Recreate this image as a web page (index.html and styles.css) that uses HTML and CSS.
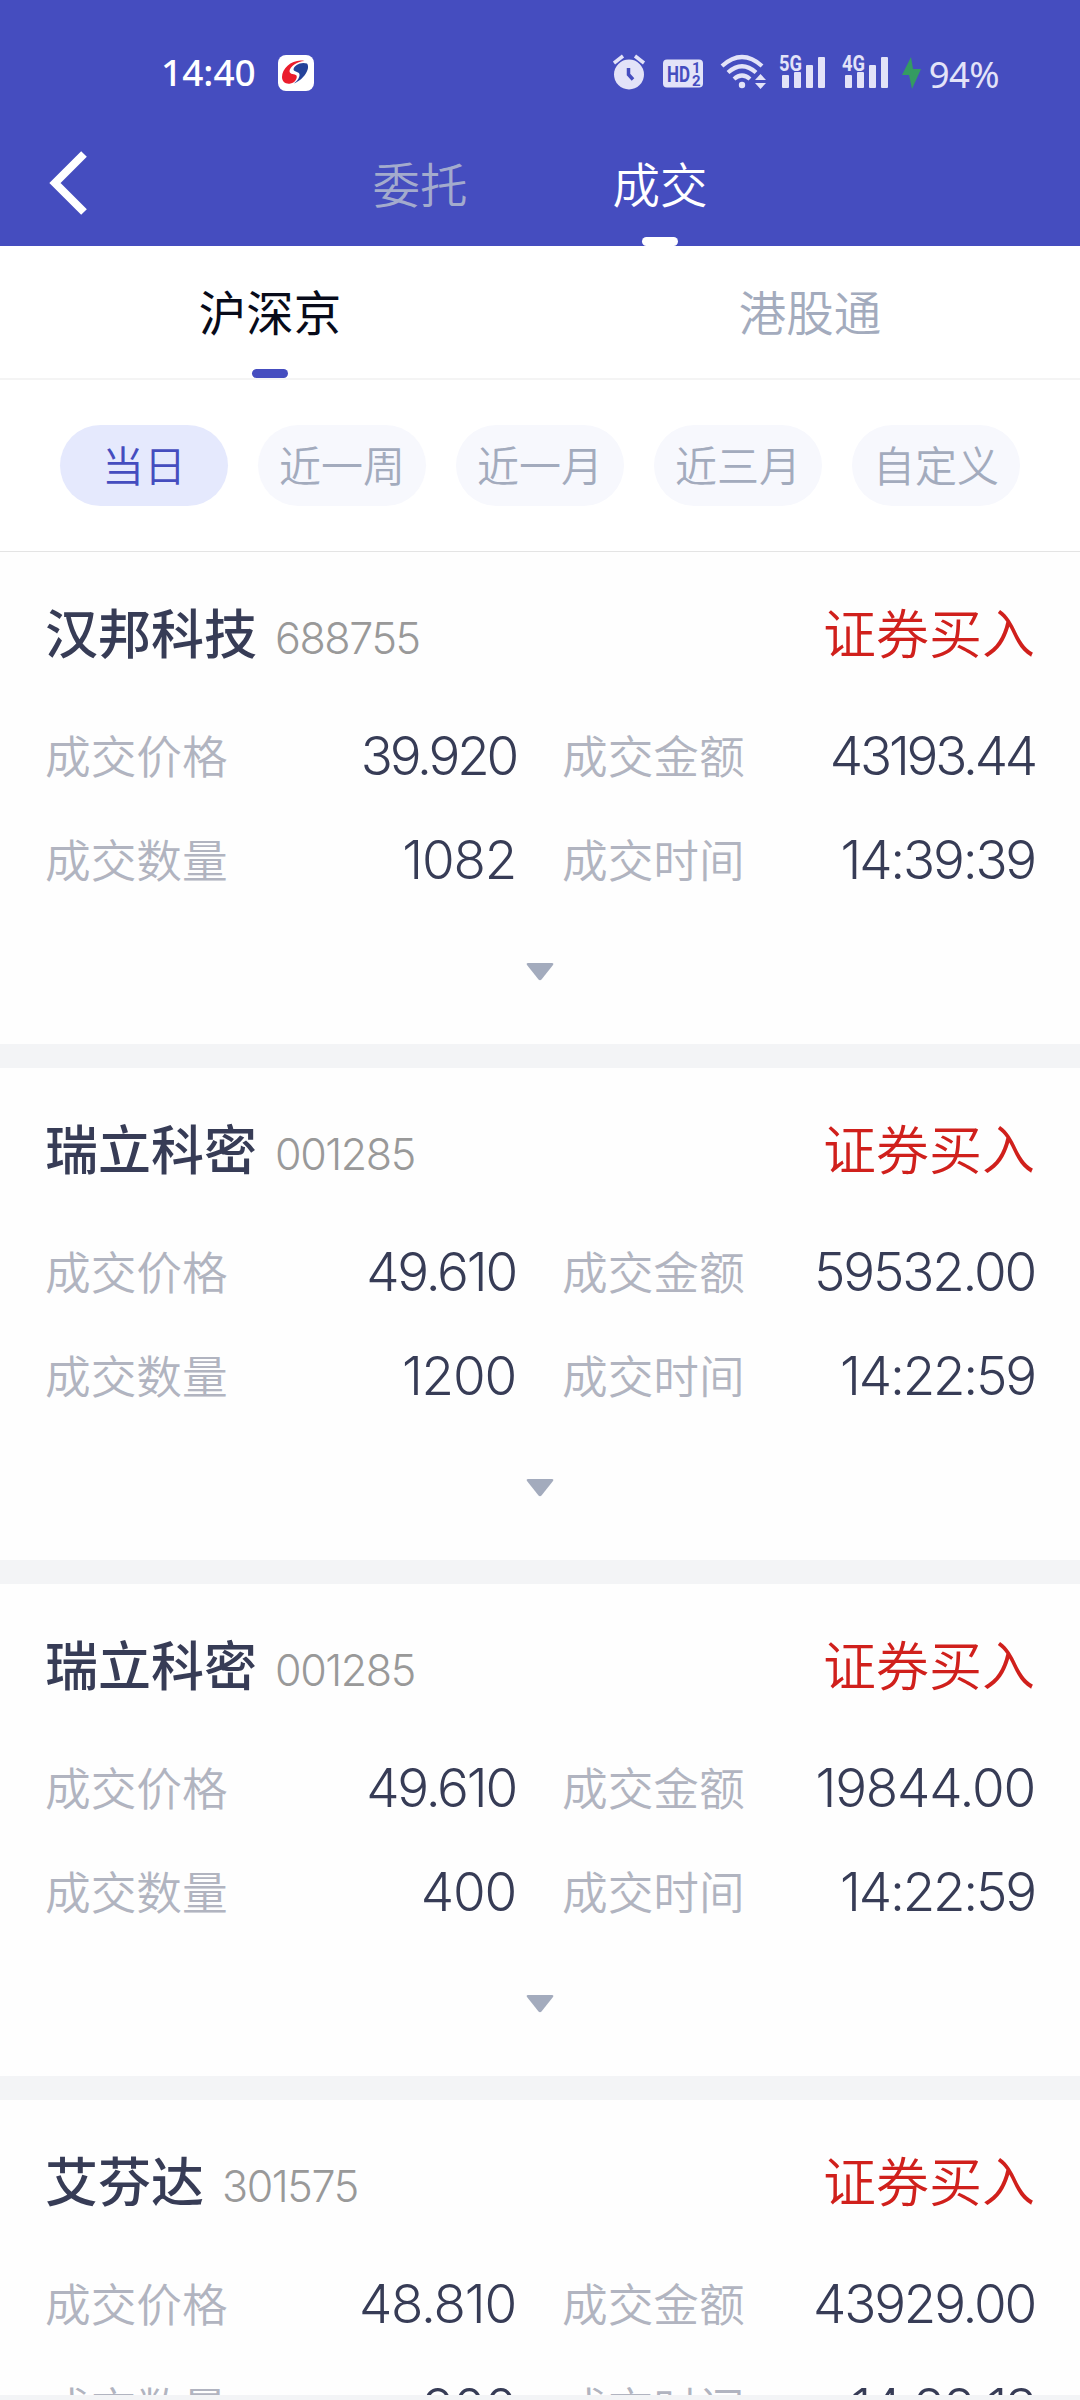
FILE: index.html
```html
<!DOCTYPE html>
<html lang="zh-CN">
<head>
<meta charset="utf-8">
<title>成交</title>
<link rel="stylesheet" href="styles.css">
</head>
<body>
<div class="screen">
  <header class="top">
    <div class="status">
      <div class="status-left">
        <span class="clock">14:40</span>
        <svg class="app-icon" width="36" height="36" viewBox="0 0 36 36">
          <rect width="36" height="36" rx="8" fill="#fff"/>
          <path d="M26.500 6C15 3.500 4 13 4 22C4 27 8 29.500 12.500 28.500C17.500 27.500 19.500 23 18.500 20.500C17 18.500 11.500 20 11.500 16C12 11 20 6.500 26.500 6Z" fill="#ea1c2c"/>
          <path d="M29 8.500C23 6.500 16 10 15.500 14.500C16 17.500 22 16 21.500 20.500C21 24 18 27 16 28.500C25 25 33 14 29 8.500Z" fill="#24429a"/>
        </svg>
      </div>
      <div class="status-right">
        <svg class="icons" width="332" height="40" viewBox="0 0 332 40" fill="#e3e3f8">
          <circle cx="16" cy="21.500" r="15"/>
          <path d="M1 10L10 3M22 3L31 10" stroke="#e3e3f8" stroke-width="3.500" fill="none"/>
          <path d="M15.500 15V21.500L20 26.500" stroke="#454dbf" stroke-width="3.500" fill="none"/>
          <rect x="50" y="6.500" width="40" height="28" rx="4"/>
          <text class="hd" x="54" y="28.500" textLength="23" lengthAdjust="spacingAndGlyphs">HD</text>
          <text class="hd-num" x="79" y="20">1</text>
          <text class="hd-num" x="79" y="32.500">2</text>
          <g fill="none" stroke="#e3e3f8" stroke-width="4.200">
            <path d="M109 13Q129 -5 149 13"/>
            <path d="M115 19.500Q129 7 143 19.500"/>
            <path d="M121 26Q129 19 137 26"/>
          </g>
          <circle cx="129" cy="32" r="3.200"/>
          <path d="M142 27L147.500 21L153 27ZM142 30L147.500 36L153 30Z"/>
          <text class="net" x="166" y="17.500" textLength="23" lengthAdjust="spacingAndGlyphs">5G</text>
          <g><rect x="169" y="22" width="7" height="13" rx="1"/><rect x="181" y="19" width="7" height="16" rx="1"/><rect x="193" y="12" width="7" height="23" rx="1"/><rect x="205" y="4" width="7" height="31" rx="1"/></g>
          <text class="net" x="229" y="17.500" textLength="23" lengthAdjust="spacingAndGlyphs">4G</text>
          <g><rect x="232" y="22" width="7" height="13" rx="1"/><rect x="244" y="19" width="7" height="16" rx="1"/><rect x="256" y="12" width="7" height="23" rx="1"/><rect x="268" y="4" width="7" height="31" rx="1"/></g>
          <path d="M298 4L289 22H296L299 36L308 16H300Z" fill="#349b62"/>
        </svg>
        <span class="battery">94%</span>
      </div>
    </div>
    <nav class="nav">
      <svg class="back" width="40" height="66" viewBox="0 0 40 66"><path d="M35 4L6 33L35 62" fill="none" stroke="#fff" stroke-width="8"/></svg>
      <span class="nav-tab">委托</span>
      <span class="nav-tab on">成交</span>
    </nav>
  </header>
  <div class="markets">
    <div class="market on">沪深京</div>
    <div class="market">港股通</div>
  </div>
  <div class="ranges">
    <span class="chip on">当日</span><span class="chip">近一周</span><span class="chip">近一月</span><span class="chip">近三月</span><span class="chip">自定义</span>
  </div>
  <main class="list">
    <section class="card">
      <div class="head"><span class="name">汉邦科技</span><span class="code">688755</span><span class="side">证券买入</span></div>
      <div class="grid">
        <span class="label">成交价格</span><span class="val tight">39.920</span><span class="label">成交金额</span><span class="val tight">43193.44</span>
        <span class="label">成交数量</span><span class="val loose">1082</span><span class="label">成交时间</span><span class="val">14:39:39</span>
      </div>
      <svg class="more" width="28" height="20" viewBox="0 0 28 20"><path d="M2 1H26Q28 1 27 3L15.500 17.500Q14 19 12.500 17.500L1 3Q0 1 2 1Z"/></svg>
    </section>
    <section class="card">
      <div class="head"><span class="name">瑞立科密</span><span class="code">001285</span><span class="side">证券买入</span></div>
      <div class="grid">
        <span class="label">成交价格</span><span class="val">49.610</span><span class="label">成交金额</span><span class="val">59532.00</span>
        <span class="label">成交数量</span><span class="val loose">1200</span><span class="label">成交时间</span><span class="val">14:22:59</span>
      </div>
      <svg class="more" width="28" height="20" viewBox="0 0 28 20"><path d="M2 1H26Q28 1 27 3L15.500 17.500Q14 19 12.500 17.500L1 3Q0 1 2 1Z"/></svg>
    </section>
    <section class="card">
      <div class="head"><span class="name">瑞立科密</span><span class="code">001285</span><span class="side">证券买入</span></div>
      <div class="grid">
        <span class="label">成交价格</span><span class="val">49.610</span><span class="label">成交金额</span><span class="val loose">19844.00</span>
        <span class="label">成交数量</span><span class="val loose">400</span><span class="label">成交时间</span><span class="val">14:22:59</span>
      </div>
      <svg class="more" width="28" height="20" viewBox="0 0 28 20"><path d="M2 1H26Q28 1 27 3L15.500 17.500Q14 19 12.500 17.500L1 3Q0 1 2 1Z"/></svg>
    </section>
    <section class="card">
      <div class="head"><span class="name">艾芬达</span><span class="code">301575</span><span class="side">证券买入</span></div>
      <div class="grid">
        <span class="label">成交价格</span><span class="val loose">48.810</span><span class="label">成交金额</span><span class="val">43929.00</span>
        <span class="label">成交数量</span><span class="val loose">900</span><span class="label">成交时间</span><span class="val">14:22:13</span>
      </div>
    </section>
  </main>
</div>
</body>
</html>
```
FILE: styles.css
```css
* { box-sizing: border-box; }
body { margin: 0; }
.screen {
  width: 1080px;
  height: 2400px;
  display: flex;
  flex-direction: column;
  overflow: hidden;
  background: #f3f4f6;
  font-family: "Noto Sans CJK SC", sans-serif;
  font-weight: 350;
  white-space: nowrap;
}
.top { height: 246px; flex: none; background: #454dbf; color: #fff; }
.status {
  height: 126px;
  padding: 20px 81px 0 161px;
  display: flex;
  align-items: center;
  justify-content: space-between;
}
.status-left, .status-right { display: flex; align-items: center; }
.clock { font: 500 37px/40px "Noto Sans", sans-serif; width: 117px; padding-bottom: 2px; }
.status-right { color: #e3e3f8; }
.battery { font: 400 36.5px/40px "Noto Sans", sans-serif; letter-spacing: -0.6px; margin-left: -16px; padding-top: 2px; }
.icons { margin-bottom: 1px; }
.icons text { font-family: "Roboto", sans-serif; font-weight: 700; }
.icons .hd { font-size: 22px; fill: #454dbf; }
.icons .hd-num { font-size: 15px; fill: #454dbf; }
.icons .net { font-size: 21.5px; }
.nav { height: 120px; display: flex; padding-left: 49px; font-size: 47.5px; line-height: 114px; }
.back { margin: 24px 211px 0 0; }
.nav-tab { width: 240px; text-align: center; color: #a3abcd; }
.nav-tab.on { color: #fff; }
.on { position: relative; }
.nav-tab.on::after, .market.on::after {
  content: "";
  position: absolute;
  left: 50%;
  bottom: 0;
  width: 36px;
  height: 9px;
  margin-left: -18px;
  border-radius: 4.5px;
  background: #fff;
}
.markets {
  height: 134px;
  flex: none;
  display: flex;
  background: #fff;
  border-bottom: 2px solid #f4f4f4;
  font-size: 47.5px;
  line-height: 130px;
  text-align: center;
  color: #a3abbd;
}
.market { flex: 1; }
.market.on { color: #080b1a; font-weight: 400; }
.market.on::after { background: #454dbf; }
.ranges {
  height: 172px;
  flex: none;
  display: flex;
  gap: 30px;
  padding: 45px 60px 0;
  background: #fff;
  border-bottom: 1px solid #e4e4e4;
}
.chip {
  width: 168px;
  height: 81px;
  border-radius: 41px;
  background: #f7f8fd;
  color: #a3abbd;
  font-size: 42px;
  line-height: 78px;
  text-align: center;
}
.chip.on { background: #e5e9fd; color: #454dbf; }
.list { display: flex; flex-direction: column; gap: 24px; height: 1843px; overflow: hidden; }
.card {
  height: 492px;
  flex: none;
  padding: 34px 45px 0;
  background: #fefefe;
  display: flex;
  flex-direction: column;
  color: #373c56;
}
.head { display: flex; align-items: baseline; height: 90px; line-height: 90px; font-size: 53px; }
.name { font-weight: 500; }
.code { margin-left: 18px; font-family: "Inter", sans-serif; font-weight: 300; font-size: 43px; letter-spacing: -1.4px; color: #999; }
.side { margin-left: auto; color: #d0201c; }
.grid {
  display: grid;
  grid-template-columns: 200px 271px 246px 273px;
  grid-template-rows: 104px 104px;
  margin-top: 26px;
  line-height: 104px;
}
.label { font-size: 45.7px; color: #b1b4c0; }
.label:nth-child(4n+3) { padding-left: 46px; }
.val {
  padding-top: 2px;
  font-family: "Inter", sans-serif;
  font-size: 53px;
  font-weight: 300;
  letter-spacing: -2.2px;
  text-align: right;
}
.val.tight { letter-spacing: -3.2px; }
.val.loose { letter-spacing: -1.2px; }
.more { align-self: center; margin-top: 52px; fill: #a3abbd; }
```
